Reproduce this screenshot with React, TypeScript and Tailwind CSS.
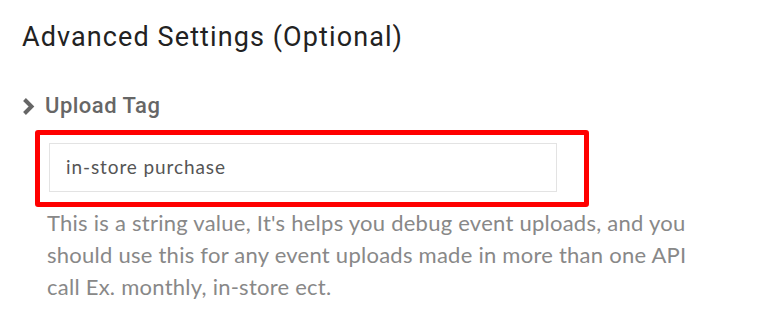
import React from 'react';

const App: React.FC = () => {
  return (
    <div className="w-[768px] h-[328px] bg-white pl-[22px] pt-[20px]" style={{ fontFamily: 'Roboto, sans-serif' }}>
      <h2 className="text-[27px] leading-[34px] font-normal text-[#222] tracking-[1.1px]">
        Advanced Settings (Optional)
      </h2>

      <div className="mt-[39px] flex items-center gap-[10px]">
        <svg width="13" height="17" viewBox="0 0 13 17" className="shrink-0">
          <path d="M2.5 1.5 L9.5 8.5 L2.5 15.5" fill="none" stroke="#666" strokeWidth="4" strokeLinejoin="miter" />
        </svg>
        <span className="text-[22px] leading-[26px] font-medium text-[#666] tracking-[0.5px]">Upload Tag</span>
      </div>

      {/* highlighted input */}
      <div className="ml-[13px] mt-[11px] w-[554px] h-[77px] border-[5px] border-[#ff0000] rounded-[3px] pl-[9px] pr-[27px] pt-[8px]">
        <div
          className="h-[49px] border border-[#e3e3e3] flex items-center pl-[16px] text-[19px] text-[#555] tracking-[0.9px]"
          style={{ fontFamily: 'Lato, sans-serif' }}
        >
          in-store purchase
        </div>
      </div>

      <p
        className="ml-[25px] w-[660px] text-[22px] leading-[32px] text-[#888] font-normal tracking-[0.25px]"
        style={{ fontFamily: 'Lato, sans-serif' }}
      >
        This is a string value, It's helps you debug event uploads, and you should use this for any event uploads made in more than one API call Ex. monthly, in-store ect.
      </p>
    </div>
  );
};

export default App;
